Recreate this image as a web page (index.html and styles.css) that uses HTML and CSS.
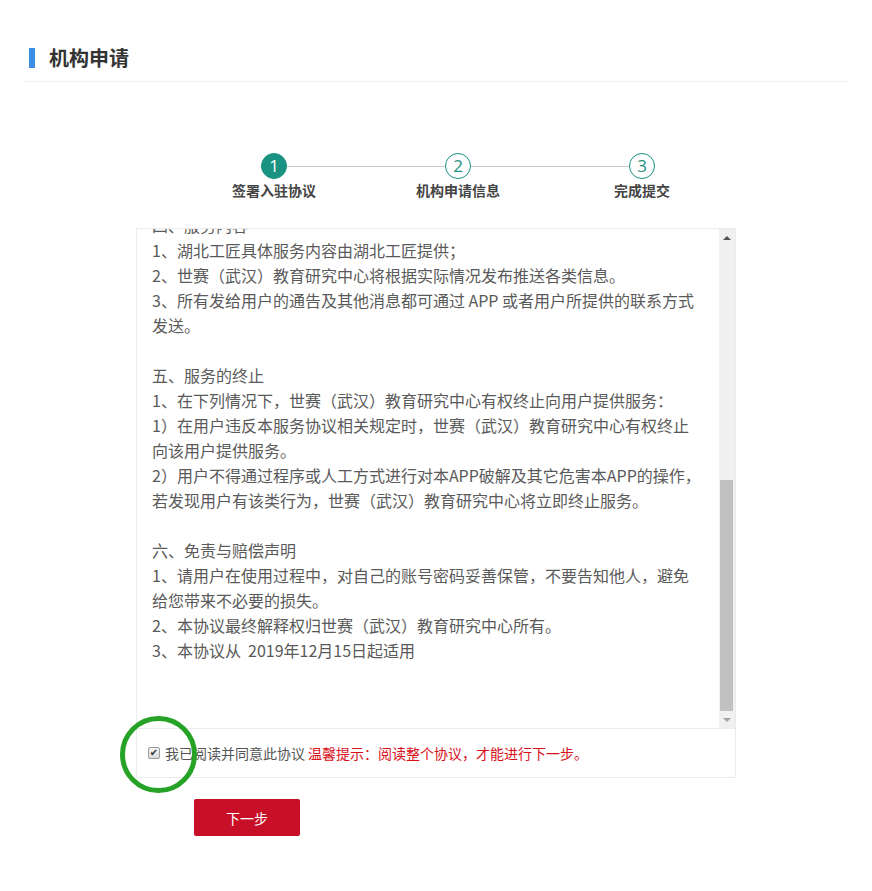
FILE: index.html
```html
<!DOCTYPE html>
<html lang="zh-CN">

  <head>
    <meta charset="UTF-8">
    <meta name="viewport" content="width=device-width, initial-scale=1.0">
    <title>机构申请</title>

    <link rel="stylesheet" href="styles.css">
  </head>

  <body>

    <div class="page">

      <div class="page-head">
        <h2 class="page-title">机构申请</h2>
      </div>

      <div class="apply">

        <div class="steps">
          <div class="steps-track">
            <span class="step-num active">1</span>
            <span class="step-line"></span>
            <span class="step-num">2</span>
            <span class="step-line"></span>
            <span class="step-num">3</span>
          </div>
          <div class="steps-labels">
            <span>签署入驻协议</span>
            <span>机构申请信息</span>
            <span>完成提交</span>
          </div>
        </div>

        <div class="agreement">
          <div class="agreement-text">
            <p>四、服务内容</p>
            <p>1、湖北工匠具体服务内容由湖北工匠提供；</p>
            <p>2、世赛（武汉）教育研究中心将根据实际情况发布推送各类信息。</p>
            <p>3、所有发给用户的通告及其他消息都可通过 APP 或者用户所提供的联系方式<br>发送。</p>
            <p class="blank"></p>
            <p>五、服务的终止</p>
            <p>1、在下列情况下，世赛（武汉）教育研究中心有权终止向用户提供服务：</p>
            <p>1）在用户违反本服务协议相关规定时，世赛（武汉）教育研究中心有权终止<br>向该用户提供服务。</p>
            <p>2）用户不得通过程序或人工方式进行对本APP破解及其它危害本APP的操作，<br>若发现用户有该类行为，世赛（武汉）教育研究中心将立即终止服务。</p>
            <p class="blank"></p>
            <p>六、免责与赔偿声明</p>
            <p>1、请用户在使用过程中，对自己的账号密码妥善保管，不要告知他人，避免<br>给您带来不必要的损失。</p>
            <p>2、本协议最终解释权归世赛（武汉）教育研究中心所有。</p>
            <p>3、本协议从 &nbsp;2019年12月15日起适用</p>
          </div>
          <div class="scrollbar">
            <span class="scroll-arrow up"></span>
            <span class="scroll-track"><span class="scroll-thumb"></span></span>
            <span class="scroll-arrow down"></span>
          </div>
        </div>

        <div class="agree-row">
          <label class="agree-label">
            <input type="checkbox" checked>
            <span>我已阅读并同意此协议</span>
          </label>
          <span class="agree-tip">温馨提示：阅读整个协议，才能进行下一步。</span>
          <span class="mark-circle"></span>
        </div>

        <button type="button" class="btn-next">下一步</button>

      </div>
    </div>

  </body>

</html>
```

FILE: styles.css
```css
* {
  margin: 0;
  padding: 0;
  box-sizing: border-box;
}

body {
  background: #fff;
  font-family: "Noto Sans CJK SC", "Noto Sans", sans-serif;
  color: #555;
}

.page {
  padding: 0 24px;
}

.page-head {
  padding: 47px 0 12px 5px;
  border-bottom: 1px solid #f2f2f2;
}

.page-title {
  display: flex;
  align-items: center;
  gap: 14px;
  font-size: 20px;
  line-height: 22px;
  font-weight: bold;
  color: #333;

  &::before {
    content: "";
    width: 6px;
    height: 20px;
    background: #3a8ee6;
  }
}

.apply {
  padding-left: 112px;
  padding-bottom: 40px;
}

/* steps */

.steps {
  margin-top: 71px;
}

.steps-track {
  display: flex;
  align-items: center;
  width: 394px;
  margin-left: 125px;
}

.step-num {
  width: 26px;
  height: 26px;
  border-radius: 50%;
  border: 1px solid #1a9282;
  color: #1a9282;
  font-family: "Open Sans", sans-serif;
  font-size: 17px;
  line-height: 24px;
  text-align: center;

  &.active {
    background: #1a9282;
    color: #fff;
  }
}

.step-line {
  flex: 1;
  height: 1px;
  background: #ccc;
}

.steps-labels {
  display: grid;
  grid-template-columns: repeat(3, 184px);
  margin-left: 46px;
  margin-top: 1px;

  & span {
    text-align: center;
    font-size: 14px;
    line-height: 20px;
    font-weight: bold;
    color: #444;
  }
}

/* agreement */

.agreement {
  display: flex;
  width: 600px;
  height: 500px;
  margin-top: 28px;
  border: 1px solid #ebebeb;
  border-bottom: none;
}

.agreement-text {
  flex: 1;
  overflow: hidden;
  padding: 0 4px 0 15px;
  font-size: 16px;
  line-height: 25px;
  color: #5a5a5a;
  white-space: nowrap;

  & p:first-child {
    margin-top: -16px;
  }

  & .blank {
    height: 25px;
  }
}

.scrollbar {
  width: 16px;
  display: flex;
  flex-direction: column;
  background: #f0f0f0;
}

.scroll-arrow {
  height: 17px;
  display: flex;
  align-items: center;
  justify-content: center;

  &::after {
    content: "";
    border-left: 4px solid transparent;
    border-right: 4px solid transparent;
  }

  &.up::after {
    border-bottom: 4px solid #505050;
  }

  &.down::after {
    border-top: 4px solid #a3a3a3;
  }
}

.scroll-track {
  flex: 1;
  display: flex;
  flex-direction: column;
  justify-content: flex-end;
  padding: 0 2px 0 1px;
}

.scroll-thumb {
  height: 231px;
  background: #c1c1c1;
}

.agree-row {
  position: relative;
  display: flex;
  align-items: center;
  width: 600px;
  height: 50px;
  padding-left: 11px;
  border: 1px solid #ebebeb;
  font-size: 14px;
  white-space: nowrap;
}

.agree-label {
  display: flex;
  align-items: center;
  gap: 3px;
  color: #555;

  & input {
    appearance: none;
    width: 12px;
    height: 12px;
    border: 1px solid #9a9a9a;
    border-radius: 2px;
    background: linear-gradient(#f4f4f4, #dcdcdc);
    display: grid;
    place-items: center;
    margin-right: 2px;
  }

  & input:checked::after {
    content: "✔";
    font-family: "DejaVu Sans", sans-serif;
    font-size: 10px;
    line-height: 10px;
    color: #333;
  }
}

.agree-tip {
  color: #d9101a;
  margin-left: 3px;
}

/* green highlight ring drawn over the checkbox */
.mark-circle {
  position: absolute;
  left: -17px;
  top: -13px;
  width: 77px;
  height: 77px;
  border: 5px solid #26a326;
  border-radius: 50%;
  pointer-events: none;
}

.btn-next {
  display: block;
  width: 106px;
  height: 37px;
  margin: 21px 0 0 58px;
  border: none;
  border-radius: 2px;
  background: #c70f27;
  color: #fff;
  font-family: inherit;
  font-size: 14px;
  cursor: pointer;
}
```
